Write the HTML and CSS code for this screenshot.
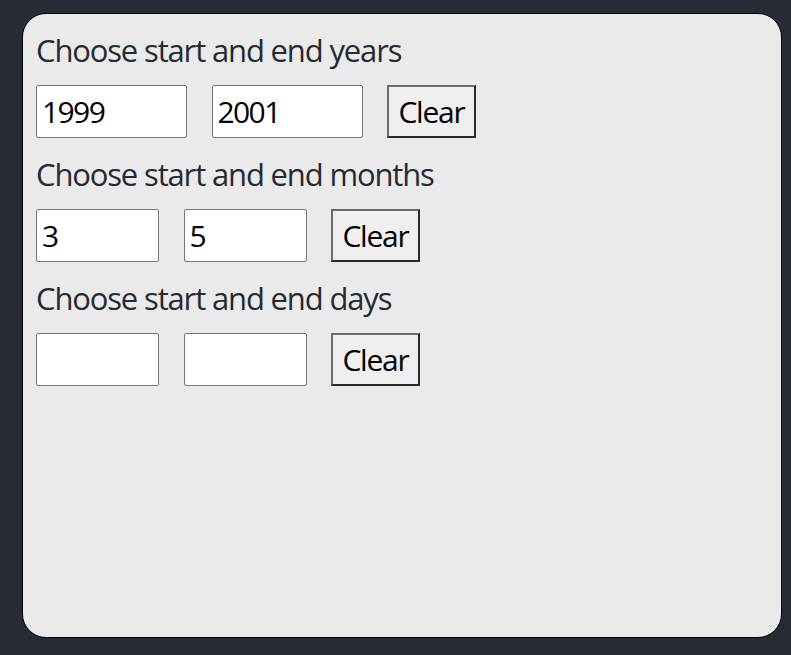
FILE: index.html
```html
<!DOCTYPE html>
<html>
<head>
<meta charset="utf-8">
<link rel="stylesheet" href="styles.css">
</head>
<body>
<div class="card">
  <div class="section">
    <div class="label">Choose start and end years</div>
    <div class="row">
      <input class="field field-wide" type="text" value="1999">
      <input class="field field-wide" type="text" value="2001">
      <button class="clear">Clear</button>
    </div>
  </div>
  <div class="section">
    <div class="label">Choose start and end months</div>
    <div class="row">
      <input class="field" type="text" value="3">
      <input class="field" type="text" value="5">
      <button class="clear">Clear</button>
    </div>
  </div>
  <div class="section">
    <div class="label">Choose start and end days</div>
    <div class="row">
      <input class="field" type="text" value="">
      <input class="field" type="text" value="">
      <button class="clear">Clear</button>
    </div>
  </div>
</div>
</body>
</html>
```

FILE: styles.css
```css
html, body {
  margin: 0;
  padding: 0;
  background: #272b34;
}
body {
  padding: 13px 0 0 22px;
  font-family: "Open Sans", "Noto Sans", sans-serif;
}
.card {
  box-sizing: border-box;
  width: 760px;
  height: 625px;
  background: #eaeaea;
  border: 1px solid #000;
  border-radius: 24px;
  padding: 16px 13px;
}
.section {
  margin-bottom: 16px;
}
.label {
  font-size: 31px;
  letter-spacing: -1.15px;
  line-height: 40px;
  color: #262a33;
  margin-bottom: 15px;
}
.row {
  display: flex;
  gap: 24.5px;
}
.field {
  box-sizing: border-box;
  width: 123px;
  height: 53px;
  margin: 0;
  border: 1px solid #767676;
  border-radius: 2px;
  background: #fff;
  padding: 0 5px;
  font-family: "Open Sans", "Noto Sans", sans-serif;
  font-size: 30px;
  letter-spacing: -1.6px;
  color: #000;
}
.field-wide {
  width: 151px;
}
.clear {
  box-sizing: border-box;
  width: 89px;
  height: 53px;
  margin: 0;
  padding: 0;
  border: 2px solid #2a2a2a;
  border-top-color: #6a6a6a;
  border-left-color: #6a6a6a;
  background: #efefef;
  font-family: "Open Sans", "Noto Sans", sans-serif;
  font-size: 30px;
  letter-spacing: -1.2px;
  color: #000;
}
```
